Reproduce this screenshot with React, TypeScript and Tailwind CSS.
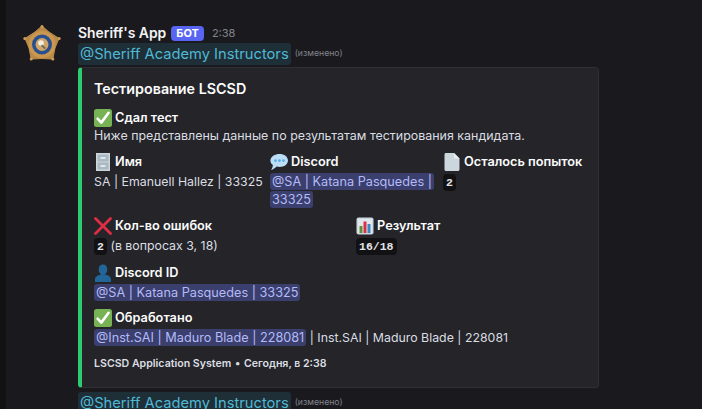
import React from "react";

const Check = () => (
  <svg viewBox="0 0 18 18" className="w-[18px] h-[18px] shrink-0">
    <rect x="0" y="0" width="18" height="18" rx="2.5" fill="#77b255" />
    <path d="M3.6 9.6 L7.3 13.6 L14.6 3.8" stroke="#fff" strokeWidth="2.6" fill="none" strokeLinecap="round" strokeLinejoin="round" />
  </svg>
);
const Cabinet = () => (
  <svg viewBox="0 0 18 18" className="w-[18px] h-[18px] shrink-0">
    <rect x="2" y="0" width="14" height="18" fill="#ccd6dd" />
    <rect x="3.5" y="1.5" width="11" height="7" fill="#aab8c2" />
    <rect x="3.5" y="9.5" width="11" height="7" fill="#aab8c2" />
    <rect x="6.5" y="4" width="5" height="2" fill="#e1e8ed" />
    <rect x="6.5" y="12" width="5" height="2" fill="#e1e8ed" />
  </svg>
);
const Bubble = () => (
  <svg viewBox="0 0 18 18" className="w-[18px] h-[18px] shrink-0">
    <path d="M9.6 1C14.2 1 18 3.7 18 7.6 18 11.4 14.2 14 9.6 14 8.6 14 7.6 13.9 6.7 13.6 5.4 15 3.2 16.6 1 17 2 15.7 2.8 13.8 2.9 12 1.1 10.8 0.4 9.3 0.4 7.6 0.4 3.7 5 1 9.6 1Z" fill="#bbddf5" />
    <circle cx="5.5" cy="7.6" r="1.3" fill="#55acee" />
    <circle cx="9.5" cy="7.6" r="1.3" fill="#55acee" />
    <circle cx="13.5" cy="7.6" r="1.3" fill="#55acee" />
  </svg>
);
const Page = () => (
  <svg viewBox="0 0 18 18" className="w-[18px] h-[18px] shrink-0">
    <path d="M1.5 1.5C1.5.7 2.1 0 3 0H11L16.5 5.5V16.5C16.5 17.4 15.8 18 15 18H3C2.1 18 1.5 17.4 1.5 16.5Z" fill="#ccd6dd" />
    <path d="M11 0L16.5 5.5H12C11.4 5.5 11 5 11 4.5Z" fill="#e9eef2" />
  </svg>
);
const Cross = () => (
  <svg viewBox="0 0 18 18" className="w-[18px] h-[18px] shrink-0">
    <path d="M1.5 1.5L16.5 16.5M16.5 1.5L1.5 16.5" stroke="#dd2e44" strokeWidth="2.8" strokeLinecap="round" />
  </svg>
);
const Chart = () => (
  <svg viewBox="0 0 18 18" className="w-[18px] h-[18px] shrink-0">
    <rect x="0.5" y="0.5" width="17" height="17" rx="2" fill="#ccd6dd" />
    <rect x="2" y="2" width="14" height="14" fill="#e1e8ed" />
    <rect x="3.5" y="9" width="3" height="7" fill="#5c913b" />
    <rect x="7.5" y="4.5" width="3" height="11.5" fill="#dd2e44" />
    <rect x="11.5" y="7" width="3" height="9" fill="#3b88c3" />
  </svg>
);
const Person = () => (
  <svg viewBox="0 0 18 18" className="w-[18px] h-[18px] shrink-0">
    <path d="M1 18V15.5C1 12.5 4 11.2 6.6 10.8V9.8C5.3 8.9 4.7 7.4 4.7 5.4 4.7 2.2 6.4 0.5 9 0.5S13.3 2.2 13.3 5.4C13.3 7.4 12.7 8.9 11.4 9.8V10.8C14 11.2 17 12.5 17 15.5V18Z" fill="#226699" />
  </svg>
);

const Avatar = () => (
  <svg viewBox="0 0 40 40" className="w-10 h-10 shrink-0">
    <path d="M20 2 L27 8 L37 14.4 L33 24 L30.8 35 L20 34.5 L9.2 35 L7 24 L3 14.4 L13 8 Z" fill="#b98a48" stroke="#b98a48" strokeWidth="1" strokeLinejoin="round" />
    <circle cx="20" cy="2.4" r="1.5" fill="#cf9d59" />
    <circle cx="37.2" cy="14.4" r="1.5" fill="#cf9d59" />
    <circle cx="30.8" cy="35" r="1.5" fill="#cf9d59" />
    <circle cx="9.2" cy="35" r="1.5" fill="#cf9d59" />
    <circle cx="2.8" cy="14.4" r="1.5" fill="#cf9d59" />
    <circle cx="20" cy="20.5" r="13.5" fill="#c9974f" />
    <circle cx="20" cy="20.5" r="10" fill="#2a4f8f" />
    <circle cx="20" cy="20.5" r="6.5" fill="#cfa669" />
    <circle cx="19" cy="19" r="2.8" fill="#f2efe6" />
    <path d="M20 20.5l4 3.5-1.5 1-3.5-3z" fill="#6f6a5c" />
  </svg>
);

const Mention = ({ children, className = "" }: { children: React.ReactNode; className?: string }) => (
  <span className={`bg-[#3a3f6e] text-[#b4baf6] text-[12.7px] rounded-[3px] px-[2px] py-[1px] ${className}`} style={{ WebkitBoxDecorationBreak: "clone", boxDecorationBreak: "clone" }}>
    {children}
  </span>
);

const Role = ({ children }: { children: React.ReactNode }) => (
  <span className="bg-[#1f2f38] text-[#4fb8d4] rounded-[3px] px-[2px] py-[1px] text-[14.7px] leading-[20px]">{children}</span>
);

const Code = ({ children }: { children: React.ReactNode }) => (
  <code className="bg-[#121214] text-[#e4e4e7] rounded-[4px] px-[3px] py-[2px] text-[11.5px] leading-[16px] font-semibold" style={{ fontFamily: "'Liberation Mono', 'DejaVu Sans Mono', monospace" }}>
    {children}
  </code>
);

const Field = ({ icon, name, children, className = "" }: { icon: React.ReactNode; name: string; children: React.ReactNode; className?: string }) => (
  <div className={`min-w-0 ${className}`}>
    <div className="flex items-center gap-[3px] h-[18px] text-[12.75px] font-semibold text-[#fbfbfb] whitespace-nowrap">
      {icon}
      <span>{name}</span>
    </div>
    <div className="text-[12.35px] leading-[18px] mt-[2px] text-[#dbdee1]">{children}</div>
  </div>
);

export default function App() {
  return (
    <div className="w-[702px] h-[409px] overflow-hidden bg-[#1a1a1e] flex" style={{ fontFamily: "Inter, 'Noto Sans', sans-serif" }}>
      <div className="w-[6px] bg-[#121214] shrink-0" />
      <div className="flex-1 min-w-0 flex pt-[24px] pl-[16px]">
        <div className="shrink-0"><Avatar /></div>
        <div className="ml-[16px] min-w-0">
          <div className="flex items-center h-[18px]">
            <span className="text-[13.9px] font-semibold text-[#f2f3f5]">Sheriff's App</span>
            <span className="ml-[5px] bg-[#5865f2] text-white text-[11px] font-bold rounded-[4px] h-[15px] px-[5px] flex items-center">БОТ</span>
            <span className="ml-[8px] text-[11px] text-[#82838b]">2:38</span>
          </div>
          <div className="h-[22px] mt-[1px] flex items-center whitespace-nowrap">
            <Role>@Sheriff Academy Instructors</Role>
            <span className="ml-[4px] text-[8.7px] text-[#82838b]">(изменено)</span>
          </div>
          <div className="mt-[2px] w-[521px] h-[321px] rounded-[4px] border border-[#2f2f35] border-l-4 border-l-[#2ecc71] bg-[#242429] pl-[12px] pt-[11px] pr-[12px]">
            <div className="text-[14.3px] leading-[20px] font-semibold text-[#fbfbfb]">Тестирование LSCSD</div>
            <div className="mt-[10px] flex items-center gap-[3px] h-[18px] text-[12.75px] font-semibold text-[#fbfbfb]">
              <Check /><span>Сдал тест</span>
            </div>
            <div className="text-[12.45px] leading-[18px] text-[#dbdee1] whitespace-nowrap">Ниже представлены данные по результатам тестирования кандидата.</div>
            <div className="mt-[8px] grid grid-cols-[176px_86px_87px_1fr] gap-y-[8px]">
              <Field icon={<Cabinet />} name="Имя"><span className="whitespace-nowrap">SA | Emanuell Hallez | 33325</span></Field>
              <Field icon={<Bubble />} name="Discord" className="col-span-2 pr-[4px]"><Mention>@SA | Katana Pasquedes | 33325</Mention></Field>
              <Field icon={<Page />} name="Осталось попыток"><Code>2</Code></Field>
              <Field icon={<Cross />} name="Кол-во ошибок" className="col-span-2 pb-[1px]"><Code>2</Code> <span>(в вопросах 3, 18)</span></Field>
              <Field icon={<Chart />} name="Результат" className="col-span-2 pb-[1px]"><Code>16/18</Code></Field>
              <Field icon={<Person />} name="Discord ID" className="col-span-4 -mb-[1px]"><Mention>@SA | Katana Pasquedes | 33325</Mention></Field>
              <Field icon={<Check />} name="Обработано" className="col-span-4"><span className="whitespace-nowrap"><Mention>@Inst.SAI | Maduro Blade | 228081</Mention> | Inst.SAI | Maduro Blade | 228081</span></Field>
            </div>
            <div className="mt-[9px] text-[10.6px] leading-[16px] font-semibold text-[#dbdee1] whitespace-nowrap">LSCSD Application System <span className="mx-[1px]">•</span> Сегодня, в 2:38</div>
          </div>
          <div className="h-[24px] mt-[3px] flex items-center whitespace-nowrap">
            <Role>@Sheriff Academy Instructors</Role>
            <span className="ml-[4px] text-[8.7px] text-[#82838b]">(изменено)</span>
          </div>
        </div>
      </div>
    </div>
  );
}
